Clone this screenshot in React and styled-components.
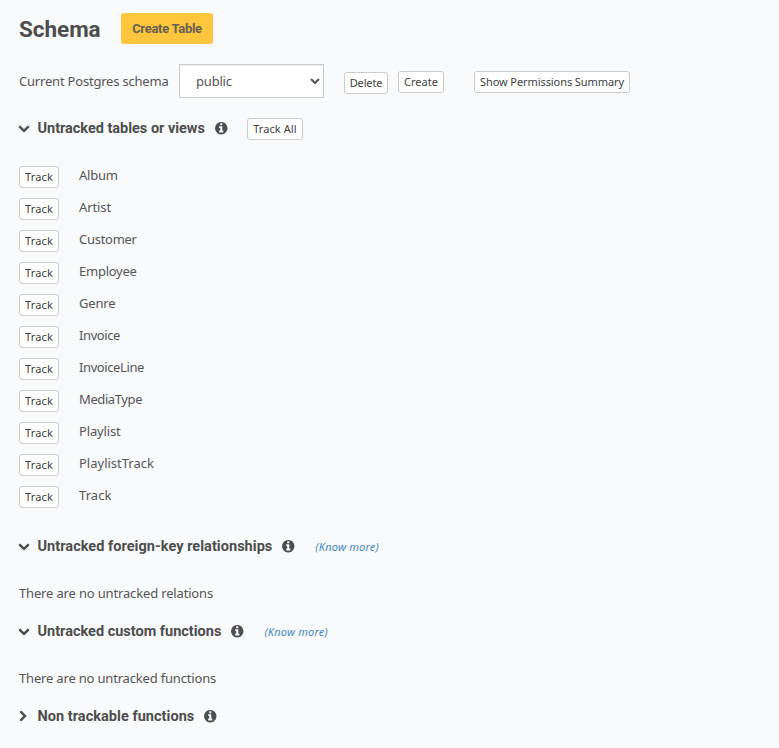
import React from 'react';
import styled, { createGlobalStyle } from 'styled-components';

const GlobalStyle = createGlobalStyle`
  * { box-sizing: border-box; }
  body {
    margin: 0;
    background: #f9fafc;
    color: #555;
    font: 13px/20px "Noto Sans", "Open Sans", sans-serif;
  }
`;

const Page = styled.main`
  min-height: 748px;
  padding: 13px 19px 0;
`;

const Header = styled.header`
  display: flex;
  align-items: center;
  height: 31px;
`;

const Title = styled.h1`
  width: 102px;
  margin: 0;
  color: #4d4d4d;
  font: 700 22.5px/30px Roboto, sans-serif;
  letter-spacing: -0.05px;
`;

const CreateTable = styled.button`
  width: 92px;
  height: 31px;
  padding: 0;
  border: 0;
  border-radius: 3px;
  background: #ffc53d;
  color: #666152;
  font: 700 13px/20px Roboto, sans-serif;
  letter-spacing: -0.3px;
`;

const SchemaBar = styled.div`
  display: flex;
  align-items: center;
  height: 34px;
  margin-top: 20px;
`;

const Text = styled.span`
  letter-spacing: ${(p) => p.$spacing ?? 0}px;
  white-space: nowrap;
`;

const SchemaLabel = styled(Text)`
  width: 160px;
`;

const SchemaSelect = styled.select`
  width: 145px;
  height: 34px;
  padding: 6px 12px;
  border: 1px solid #ccc;
  border-radius: 0;
  background-color: #fff;
  box-shadow: inset 0 1px 1px rgba(0, 0, 0, 0.075);
  color: #555;
  font: 13px/20px "Noto Sans", sans-serif;
  letter-spacing: -0.2px;
`;

const SmallButton = styled.button`
  flex: none;
  width: ${(p) => p.$width}px;
  height: 22px;
  margin: ${(p) => p.$top ?? 0}px 0 0 ${(p) => p.$left ?? 0}px;
  padding: 0;
  border: 1px solid #ccc;
  border-radius: 3px;
  background: #fff;
  color: #404040;
  font: 11px/18px "Noto Sans", sans-serif;
  letter-spacing: ${(p) => p.$spacing ?? 0}px;
  white-space: nowrap;
`;

const SectionHeader = styled.div`
  display: flex;
  align-items: center;
  height: 22px;
  margin: ${(p) => p.$top}px 0 0 -1px;
`;

const SectionTitle = styled.h4`
  margin: 2px 9px 0 7.5px;
  color: #4d4d4d;
  font: 700 14.5px/20px Roboto, sans-serif;
  letter-spacing: ${(p) => p.$spacing ?? 0}px;
  white-space: nowrap;
`;

const Icon = styled.svg`
  display: block;
  flex: none;
  width: ${(p) => p.$size}px;
  height: ${(p) => p.$size}px;
  fill: #4d4d4d;
`;

const KnowMore = styled.a`
  margin: 2px 0 0 19.5px;
  color: #4288c4;
  font-size: 11px;
  font-style: italic;
  letter-spacing: 0.22px;
`;

const TableList = styled.ul`
  display: grid;
  grid-auto-rows: 32px;
  margin: 26px 0 0;
  padding: 0;
  list-style: none;
`;

const TableRow = styled.li`
  display: flex;
  align-items: flex-start;
  gap: 20px;
`;

const EmptyNote = styled.p`
  margin: 26px 0 0;
  letter-spacing: ${(p) => p.$spacing}px;
`;

const Chevron = ({ open }) => (
  <Icon $size={12} viewBox="0 0 1792 1792">
    {open ? (
      <path d="M1683 808l-742 741q-19 19-45 19t-45-19l-742-741q-19-19-19-45.500t19-45.500l166-165q19-19 45-19t45 19l531 531 531-531q19-19 45-19t45 19l166 165q19 19 19 45.500t-19 45.500z" />
    ) : (
      <path d="M1107 941l-742 742q-19 19-45 19t-45-19l-166-166q-19-19-19-45t19-45l531-531-531-531q-19-19-19-45t19-45l166-166q19-19 45-19t45 19l742 742q19 19 19 45t-19 45z" transform="translate(160 0)" />
    )}
  </Icon>
);

const Info = () => (
  <Icon $size={14.5} viewBox="0 0 1792 1792">
    <path d="M1152 1376v-160q0-14-9-23t-23-9h-96v-512q0-14-9-23t-23-9h-320q-14 0-23 9t-9 23v160q0 14 9 23t23 9h96v320h-96q-14 0-23 9t-9 23v160q0 14 9 23t23 9h448q14 0 23-9t9-23zm-128-896v-160q0-14-9-23t-23-9h-192q-14 0-23 9t-9 23v160q0 14 9 23t23 9h192q14 0 23-9t9-23zm640 416q0 209-103 385.500t-279.500 279.500-385.500 103-385.500-103-279.500-279.500-103-385.500 103-385.500 279.500-279.500 385.500-103 385.500 103 279.500 279.500 103 385.500z" />
  </Icon>
);

const Section = ({ title, open, top, spacing, children }) => (
  <SectionHeader $top={top}>
    <Chevron open={open} />
    <SectionTitle $spacing={spacing}>{title}</SectionTitle>
    <Info />
    {children}
  </SectionHeader>
);

const tables = [
  ['Album', -0.25],
  ['Artist', -0.1],
  ['Customer', -0.28],
  ['Employee', -0.25],
  ['Genre', -0.2],
  ['Invoice', -0.4],
  ['InvoiceLine', -0.4],
  ['MediaType', -0.4],
  ['Playlist', -0.15],
  ['PlaylistTrack', 0],
  ['Track', 0.05],
];

export default function App() {
  return (
    <>
      <GlobalStyle />
      <Page>
        <Header>
          <Title>Schema</Title>
          <CreateTable>Create Table</CreateTable>
        </Header>
        <SchemaBar>
          <SchemaLabel $spacing={-0.2}>Current Postgres schema</SchemaLabel>
          <SchemaSelect defaultValue="public">
            <option>public</option>
          </SchemaSelect>
          <SmallButton $width={44} $left={20} $top={4} $spacing={-0.15}>Delete</SmallButton>
          <SmallButton $width={46} $left={10} $top={2}>Create</SmallButton>
          <SmallButton $width={156} $left={30} $top={2} $spacing={-0.08}>Show Permissions Summary</SmallButton>
        </SchemaBar>
        <Section title="Untracked tables or views" open top={19} spacing={-0.02}>
          <SmallButton $width={56} $left={18.5} $top={2} $spacing={0.08}>Track All</SmallButton>
        </Section>
        <TableList>
          {tables.map(([name, spacing]) => (
            <TableRow key={name}>
              <SmallButton $width={40} $top={1} $spacing={0.15}>Track</SmallButton>
              <Text $spacing={spacing}>{name}</Text>
            </TableRow>
          ))}
        </TableList>
        <Section title="Untracked foreign-key relationships" open top={18} spacing={0.04}>
          <KnowMore>(Know more)</KnowMore>
        </Section>
        <EmptyNote $spacing={-0.16}>There are no untracked relations</EmptyNote>
        <Section title="Untracked custom functions" open top={17}>
          <KnowMore>(Know more)</KnowMore>
        </Section>
        <EmptyNote $spacing={-0.18}>There are no untracked functions</EmptyNote>
        <Section title="Non trackable functions" top={17} spacing={0.04} />
      </Page>
    </>
  );
}
